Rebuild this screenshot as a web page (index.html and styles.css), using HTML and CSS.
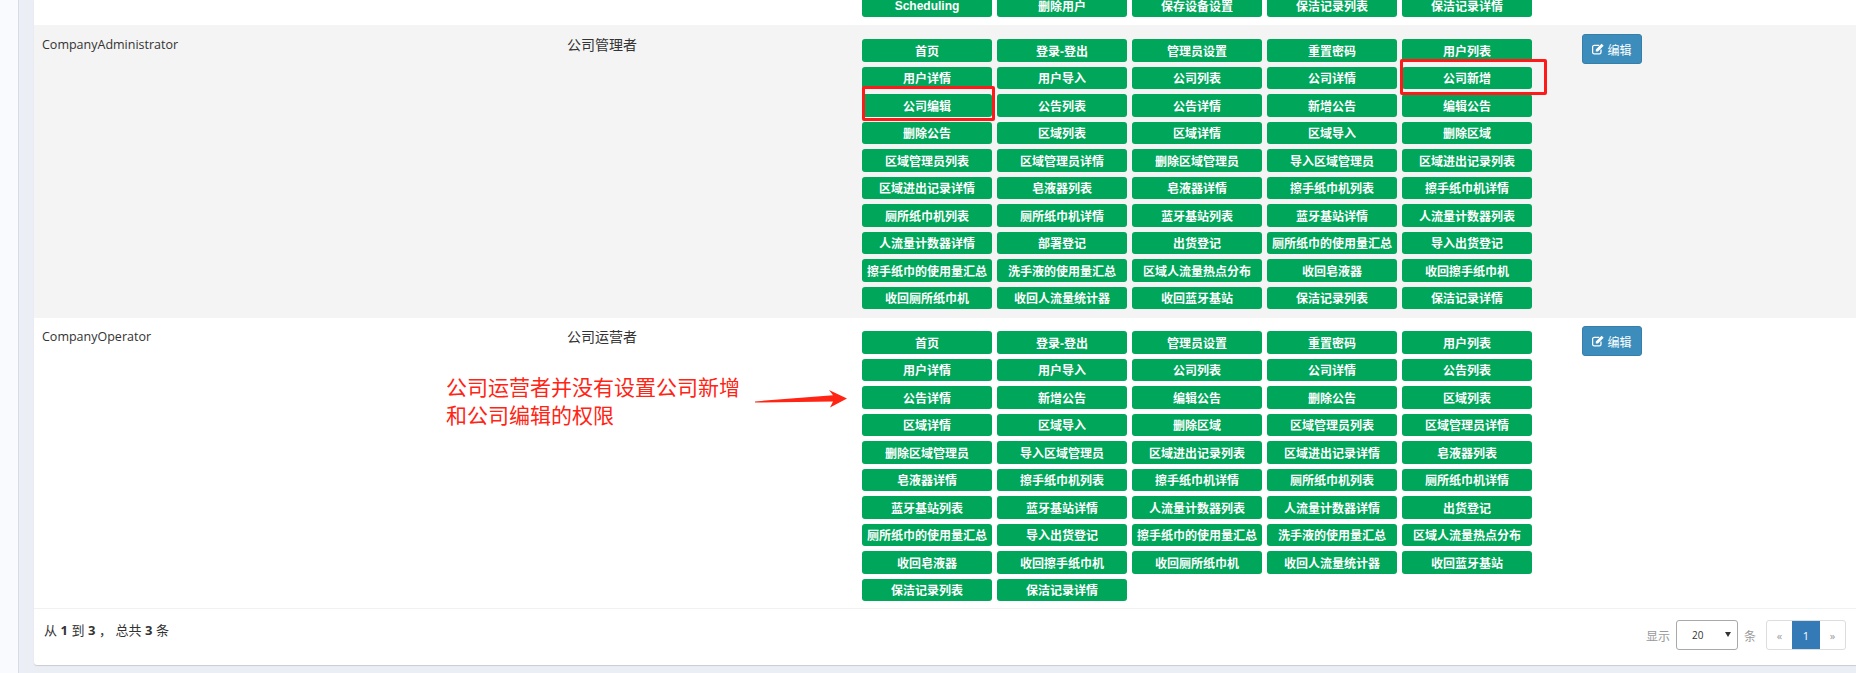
FILE: index.html
```html
<!DOCTYPE html>
<html lang="zh-CN">
<head>
<meta charset="utf-8">
<title>角色列表</title>
<link rel="stylesheet" href="styles.css">
</head>
<body>
<div class="page">
  <div class="rail"></div>
  <div class="gutter"></div>
  <main class="card">
    <section class="row row-clipped">
      <div class="name"></div>
      <div class="label"></div>
      <div class="perms">
        <span class="perm">Scheduling</span><span class="perm">删除用户</span><span class="perm">保存设备设置</span><span class="perm">保洁记录列表</span><span class="perm">保洁记录详情</span>
      </div>
      <div class="action"></div>
    </section>

    <section class="row row-alt">
      <div class="name">CompanyAdministrator</div>
      <div class="label">公司管理者</div>
      <div class="perms">
        <span class="perm">首页</span><span class="perm">登录-登出</span><span class="perm">管理员设置</span><span class="perm">重置密码</span><span class="perm">用户列表</span>
        <span class="perm">用户详情</span><span class="perm">用户导入</span><span class="perm">公司列表</span><span class="perm">公司详情</span><span class="perm">公司新增</span>
        <span class="perm">公司编辑</span><span class="perm">公告列表</span><span class="perm">公告详情</span><span class="perm">新增公告</span><span class="perm">编辑公告</span>
        <span class="perm">删除公告</span><span class="perm">区域列表</span><span class="perm">区域详情</span><span class="perm">区域导入</span><span class="perm">删除区域</span>
        <span class="perm">区域管理员列表</span><span class="perm">区域管理员详情</span><span class="perm">删除区域管理员</span><span class="perm">导入区域管理员</span><span class="perm">区域进出记录列表</span>
        <span class="perm">区域进出记录详情</span><span class="perm">皂液器列表</span><span class="perm">皂液器详情</span><span class="perm">擦手纸巾机列表</span><span class="perm">擦手纸巾机详情</span>
        <span class="perm">厕所纸巾机列表</span><span class="perm">厕所纸巾机详情</span><span class="perm">蓝牙基站列表</span><span class="perm">蓝牙基站详情</span><span class="perm">人流量计数器列表</span>
        <span class="perm">人流量计数器详情</span><span class="perm">部署登记</span><span class="perm">出货登记</span><span class="perm">厕所纸巾的使用量汇总</span><span class="perm">导入出货登记</span>
        <span class="perm">擦手纸巾的使用量汇总</span><span class="perm">洗手液的使用量汇总</span><span class="perm">区域人流量热点分布</span><span class="perm">收回皂液器</span><span class="perm">收回擦手纸巾机</span>
        <span class="perm">收回厕所纸巾机</span><span class="perm">收回人流量统计器</span><span class="perm">收回蓝牙基站</span><span class="perm">保洁记录列表</span><span class="perm">保洁记录详情</span>
      </div>
      <div class="action">
        <button class="edit" type="button"><svg class="edit-icon" viewBox="0 0 12 12" aria-hidden="true"><path d="M9 6.6v2.6A1.6 1.6 0 0 1 7.4 10.8H2.2A1.6 1.6 0 0 1 .6 9.2V4a1.6 1.6 0 0 1 1.6-1.6h5" fill="none" stroke="currentColor" stroke-width="1.3"/><path d="M3.8 6.4 9.6.8l2 2L6 8.6H3.8z" fill="currentColor"/></svg>编辑</button>
      </div>
    </section>

    <section class="row row-last">
      <div class="name">CompanyOperator</div>
      <div class="label">公司运营者</div>
      <div class="perms">
        <span class="perm">首页</span><span class="perm">登录-登出</span><span class="perm">管理员设置</span><span class="perm">重置密码</span><span class="perm">用户列表</span>
        <span class="perm">用户详情</span><span class="perm">用户导入</span><span class="perm">公司列表</span><span class="perm">公司详情</span><span class="perm">公告列表</span>
        <span class="perm">公告详情</span><span class="perm">新增公告</span><span class="perm">编辑公告</span><span class="perm">删除公告</span><span class="perm">区域列表</span>
        <span class="perm">区域详情</span><span class="perm">区域导入</span><span class="perm">删除区域</span><span class="perm">区域管理员列表</span><span class="perm">区域管理员详情</span>
        <span class="perm">删除区域管理员</span><span class="perm">导入区域管理员</span><span class="perm">区域进出记录列表</span><span class="perm">区域进出记录详情</span><span class="perm">皂液器列表</span>
        <span class="perm">皂液器详情</span><span class="perm">擦手纸巾机列表</span><span class="perm">擦手纸巾机详情</span><span class="perm">厕所纸巾机列表</span><span class="perm">厕所纸巾机详情</span>
        <span class="perm">蓝牙基站列表</span><span class="perm">蓝牙基站详情</span><span class="perm">人流量计数器列表</span><span class="perm">人流量计数器详情</span><span class="perm">出货登记</span>
        <span class="perm">厕所纸巾的使用量汇总</span><span class="perm">导入出货登记</span><span class="perm">擦手纸巾的使用量汇总</span><span class="perm">洗手液的使用量汇总</span><span class="perm">区域人流量热点分布</span>
        <span class="perm">收回皂液器</span><span class="perm">收回擦手纸巾机</span><span class="perm">收回厕所纸巾机</span><span class="perm">收回人流量统计器</span><span class="perm">收回蓝牙基站</span>
        <span class="perm">保洁记录列表</span><span class="perm">保洁记录详情</span>
      </div>
      <div class="action">
        <button class="edit" type="button"><svg class="edit-icon" viewBox="0 0 12 12" aria-hidden="true"><path d="M9 6.6v2.6A1.6 1.6 0 0 1 7.4 10.8H2.2A1.6 1.6 0 0 1 .6 9.2V4a1.6 1.6 0 0 1 1.6-1.6h5" fill="none" stroke="currentColor" stroke-width="1.3"/><path d="M3.8 6.4 9.6.8l2 2L6 8.6H3.8z" fill="currentColor"/></svg>编辑</button>
      </div>
    </section>

    <footer class="pager">
      <div class="summary">从 <b>1</b> 到 <b>3</b> ， 总共 <b>3</b> 条</div>
      <div class="paging">
        <span class="hint">显示</span>
        <div class="size"><span>20</span><i class="caret"></i></div>
        <span class="hint">条</span>
        <nav class="pages"><span class="page-link">«</span><span class="page-link current">1</span><span class="page-link">»</span></nav>
      </div>
    </footer>
  </main>

  <div class="mark mark-edit"></div>
  <div class="mark mark-new"></div>
  <p class="note">公司运营者并没有设置公司新增<br>和公司编辑的权限</p>
  <svg class="arrow" viewBox="0 0 92 20" aria-hidden="true"><path d="M0 11.4 78 5.2 74 0l18 8.6L75 17.6l3-6.2L0 12.6z" fill="#ff2414"/></svg>
</div>
</body>
</html>
```

FILE: styles.css
```css
* { box-sizing: border-box; }

html, body {
  margin: 0;
  height: 673px;
  overflow: hidden;
  background: #ebeef4;
}

body {
  font-family: "Open Sans", "Noto Sans CJK SC", sans-serif;
  font-size: 13px;
  color: #333;
}

.page {
  position: relative;
  display: flex;
  height: 673px;
  overflow: hidden;
}

.rail {
  flex: 0 0 19px;
  background: #f8fafd;
  border-right: 1px solid #d9dce4;
}

.gutter {
  flex: 0 0 15px;
  background: #ebeef4;
}

.card {
  flex: 1;
  height: 665px;
  background: #fff;
  border-radius: 0 0 0 3px;
  box-shadow: 0 1px 1px rgba(0, 0, 0, 0.15);
}

.row {
  display: flex;
  align-items: flex-start;
}

.row-clipped {
  height: 25px;
  align-items: flex-end;
  padding-bottom: 8px;
}

.row-alt {
  height: 293px;
  padding-top: 14px;
  background: #f4f4f4;
}

.row-last {
  height: 291px;
  padding-top: 13px;
  border-bottom: 1px solid #f1f1f1;
}

.name {
  flex: 0 0 533px;
  padding: 0 0 0 8px;
  margin-top: -2px;
  line-height: 16px;
  font-size: 12.5px;
  color: #333;
}

.label {
  flex: 0 0 295px;
  margin-top: -4px;
  line-height: 18px;
  font-size: 14px;
  font-family: "Noto Sans CJK SC", sans-serif;
  color: #333;
}

.perms {
  flex: 0 0 720px;
  display: grid;
  grid-template-columns: repeat(5, 130px);
  grid-auto-rows: 22.5px;
  gap: 5px;
}

.row-clipped .perms {
  height: 22.5px;
}

.perm {
  display: flex;
  align-items: center;
  justify-content: center;
  white-space: nowrap;
  background: #00a65a;
  border-radius: 3px;
  color: #fff;
  font-family: "Liberation Sans", "Noto Sans CJK SC", sans-serif;
  font-size: 12px;
  font-weight: 700;
}

.action {
  flex: 0 0 auto;
}

.edit {
  display: flex;
  align-items: center;
  justify-content: center;
  gap: 3px;
  width: 60px;
  height: 30px;
  margin-top: -5px;
  padding: 0;
  background: #3c8dbc;
  border: 1px solid #367fa9;
  border-radius: 3px;
  color: #fff;
  font-family: "Noto Sans CJK SC", sans-serif;
  font-size: 12px;
}

.edit-icon {
  width: 12px;
  height: 12px;
}

.pager {
  display: flex;
  align-items: flex-start;
  justify-content: space-between;
  padding: 11px 10px 0 10px;
}

.summary {
  margin-top: 1px;
  line-height: 18px;
  font-family: "Noto Sans CJK SC", sans-serif;
  font-size: 13px;
  word-spacing: 0.6px;
  color: #333;
}

.summary b {
  font-family: "Open Sans", sans-serif;
}

.paging {
  display: flex;
  align-items: center;
  height: 30px;
}

.hint {
  font-family: "Noto Sans CJK SC", sans-serif;
  font-size: 12px;
  color: #999;
}

.size {
  position: relative;
  width: 62px;
  height: 30px;
  margin: 0 6px;
  padding-left: 15px;
  line-height: 28px;
  border: 1px solid #a9a9a9;
  border-radius: 3px;
  font-size: 10px;
  color: #333;
}

.caret {
  position: absolute;
  top: 11px;
  right: 6px;
  width: 0;
  height: 0;
  border-left: 3px solid transparent;
  border-right: 3px solid transparent;
  border-top: 5px solid #333;
}

.pages {
  display: flex;
  height: 30px;
  margin-left: 10px;
  border: 1px solid #ddd;
  border-radius: 3px;
  overflow: hidden;
}

.page-link {
  display: flex;
  align-items: center;
  justify-content: center;
  width: 25px;
  font-size: 11px;
  color: #999;
}

.page-link.current {
  width: 28px;
  margin: -1px 0;
  background: #337ab7;
  color: #fff;
}

.mark {
  position: absolute;
  border: 3px solid #ff1a1a;
  border-radius: 2px;
}

.mark-edit {
  left: 862px;
  top: 86px;
  width: 133px;
  height: 35px;
}

.mark-new {
  left: 1400px;
  top: 59px;
  width: 147px;
  height: 36px;
}

.note {
  position: absolute;
  left: 446px;
  top: 372px;
  margin: 0;
  font-family: "Noto Sans CJK SC", sans-serif;
  font-size: 21px;
  line-height: 28px;
  color: #ff2414;
}

.arrow {
  position: absolute;
  left: 755px;
  top: 390px;
  width: 92px;
  height: 20px;
}
```
